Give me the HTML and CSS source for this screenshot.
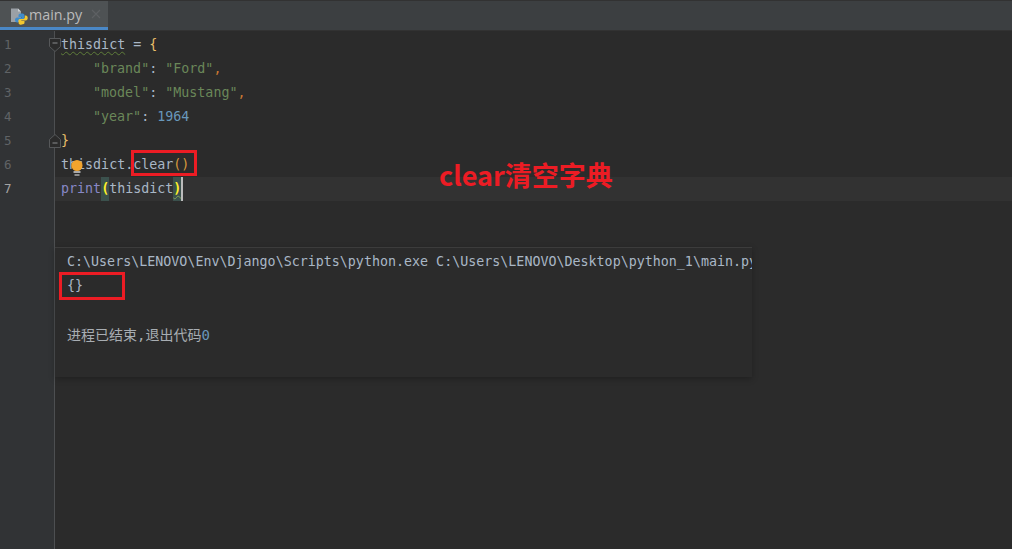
FILE: index.html
```html
<!DOCTYPE html>
<html lang="zh">
<head>
<meta charset="utf-8">
<title>main.py</title>
<link rel="stylesheet" href="styles.css">
</head>
<body>
<div class="ide">
  <div class="tabbar">
    <div class="tab">
      <svg class="pyicon" width="18" height="18" viewBox="0 0 18 18">
        <path d="M1 1.500h7l3 3V15H1z" fill="#9aa0a6"/>
        <path d="M8 1.500v3h3z" fill="#c9ced2"/>
        <path d="M11.500 6.500c-2 0-3 .6-3 1.800V10h3.200v.6H7.200c-1.300 0-2.200 1-2.200 2.400s.9 2.500 2.200 2.500h1.100v-1.700c0-1.100 1-1.800 2-1.800h2.700c.9 0 1.500-.7 1.500-1.500V8.300c0-1.200-1-1.800-3-1.800z" fill="#3f8ccb"/>
        <path d="M11.500 17.500c2 0 3-.6 3-1.700V14h-3.200v-.5h4.400c1.300 0 2-1 2-2.400s-.7-2.500-2-2.500h-.9v1.700c0 1.100-1 1.800-2 1.800h-2.700c-.9 0-1.500.7-1.500 1.500v2.300c0 1.200 1 1.800 2.900 1.800z" fill="#f2c72e"/>
      </svg>
      <span class="tabname">main.py</span>
      <svg class="tabclose" width="10" height="10" viewBox="0 0 10 10"><path d="M1 1l8 8M9 1l-8 8" stroke="#5d6063" stroke-width="1.200" fill="none"/></svg>
    </div>
  </div>
  <div class="body">
    <div class="gutter">
      <div class="num">1</div>
      <div class="num">2</div>
      <div class="num">3</div>
      <div class="num">4</div>
      <div class="num">5</div>
      <div class="num">6</div>
      <div class="num num-current">7</div>
    </div>
    <div class="editor">
      <div class="line"><span class="squiggle">thisdict</span> = <span class="brace">{</span></div>
      <div class="line indent"><span class="str">"brand"</span>: <span class="str">"Ford"</span><span class="comma">,</span></div>
      <div class="line indent"><span class="str">"model"</span>: <span class="str">"Mustang"</span><span class="comma">,</span></div>
      <div class="line indent"><span class="str">"year"</span>: <span class="numlit">1964</span></div>
      <div class="line"><span class="brace">}</span></div>
      <div class="line">thisdict.clear<span class="paren">()</span></div>
      <div class="line current"><span class="builtin">print</span><span class="match">(</span>thisdict<span class="match match-end">)</span><span class="caret"></span></div>
    </div>
  </div>

  <svg class="fold fold-open" width="12" height="14" viewBox="0 0 12 14"><path d="M.5.500h11v8l-5.500 5-5.500-5z" fill="#2b2b2b" stroke="#56585a"/><path d="M3.500 5h5" stroke="#8a8c8e"/></svg>
  <svg class="fold fold-close" width="12" height="14" viewBox="0 0 12 14"><path d="M.5 13.500h11v-8l-5.500-5-5.500 5z" fill="#2b2b2b" stroke="#56585a"/><path d="M3.500 9h5" stroke="#8a8c8e"/></svg>

  <svg class="bulb" width="14" height="18" viewBox="0 0 14 18">
    <circle cx="7" cy="6.500" r="5.500" fill="#f2a42c"/>
    <rect x="3.500" y="12" width="7" height="2" fill="#a9a9a9"/>
    <rect x="4.500" y="15" width="5" height="2" fill="#8c8c8c"/>
  </svg>

  <div class="console">
    <div class="console-line">C:\Users\LENOVO\Env\Django\Scripts\python.exe C:\Users\LENOVO\Desktop\python_1\main.py</div>
    <div class="console-line">{}</div>
    <div class="console-gap"></div>
    <div class="console-line console-exit">进程已结束,退出代码<span class="exit-code">0</span></div>
  </div>

  <div class="mark mark-clear"></div>
  <div class="mark mark-output"></div>
  <div class="note">clear清空字典</div>
</div>
</body>
</html>
```
FILE: styles.css
```css
* { box-sizing: border-box; }
html, body { margin: 0; padding: 0; }
body { background: #2b2b2b; overflow: hidden; }
.ide {
  position: relative;
  width: 1012px;
  height: 549px;
  display: flex;
  flex-direction: column;
  font-family: "DejaVu Sans Mono", "Noto Sans CJK SC", monospace;
  font-size: 13.33px;
  color: #a9b7c6;
  overflow: hidden;
}
.tabbar {
  height: 31px;
  flex: none;
  background: #3c3f41;
  border-top: 1px solid #323232;
  border-bottom: 1px solid #323232;
  display: flex;
}
.tab {
  width: 108px;
  height: 29px;
  display: flex;
  align-items: center;
  gap: 1px;
  padding: 0 0 0 10px;
  background: #4e5254;
  border-bottom: 3px solid #4a88c7;
}
.pyicon { flex: none; margin-top: 4px; }
.tabname {
  font-family: "Open Sans", "Liberation Sans", sans-serif;
  font-size: 14.3px;
  margin-top: 1px;
  color: #bbbbbb;
}
.tabclose { flex: none; margin-left: 8px; }
.body { flex: 1; display: flex; min-height: 0; }
.gutter {
  width: 55px;
  flex: none;
  background: #313335;
  border-right: 1px solid #4d4f51;
  padding-top: 2px;
}
.num {
  height: 24px;
  line-height: 24px;
  padding-left: 4px;
  font-size: 12.5px;
  color: #606366;
}
.num-current { color: #a4a3a3; }
.editor { flex: 1; padding-top: 2px; background: #2b2b2b; }
.line {
  height: 24px;
  line-height: 24px;
  padding-left: 6px;
  white-space: pre;
}
.indent { padding-left: 38px; }
.current { background: #323232; }
.squiggle {
  text-decoration: underline wavy #5f7d3a 1px;
  text-underline-offset: 2px;
}
.brace { color: #e8bf6a; }
.str { color: #6a8759; }
.comma { color: #cc7832; }
.numlit { color: #6897bb; }
.paren { color: #d79a3c; }
.builtin { color: #8888c6; }
.match {
  display: inline-block;
  background: #3b514d;
  color: #ffef28;
  font-weight: 700;
  height: 24px;
  line-height: 24px;
  vertical-align: top;
}
.match-end {
  text-decoration: underline wavy #7f9f5a 1px;
  text-underline-offset: 2px;
}
.caret {
  display: inline-block;
  width: 2px;
  height: 24px;
  background: #bbbbbb;
  vertical-align: top;
}
.fold { position: absolute; left: 49px; }
.fold-open { top: 38px; }
.fold-close { top: 134px; }
.bulb { position: absolute; left: 70px; top: 159px; }
.console {
  position: absolute;
  left: 55px;
  top: 247px;
  width: 697px;
  height: 130px;
  padding: 2px 0 0 12px;
  background: #2b2b2b;
  border-top: 1px solid #3c3c3c;
  box-shadow: 0 2px 6px rgba(0, 0, 0, 0.25);
  overflow: hidden;
  white-space: nowrap;
}
.console::before {
  content: "";
  position: absolute;
  left: 0;
  top: -1px;
  width: 79px;
  height: 1px;
  background: #5a5d5f;
}
.console-line { height: 24px; line-height: 24px; color: #a9b7c6; }
.console-gap { height: 25px; }
.console-exit { color: #a8adb2; font-size: 14px; }
.exit-code { color: #6897bb; }
.mark { position: absolute; border: 3px solid #ec1c24; }
.mark-clear { left: 131px; top: 150px; width: 66px; height: 26px; }
.mark-output { left: 59px; top: 272px; width: 66px; height: 28px; }
.note {
  position: absolute;
  left: 439px;
  top: 157px;
  font-family: "Noto Sans CJK SC", "Noto Sans", sans-serif;
  font-size: 27px;
  line-height: 36px;
  font-weight: 700;
  color: #ec1c24;
}
```
